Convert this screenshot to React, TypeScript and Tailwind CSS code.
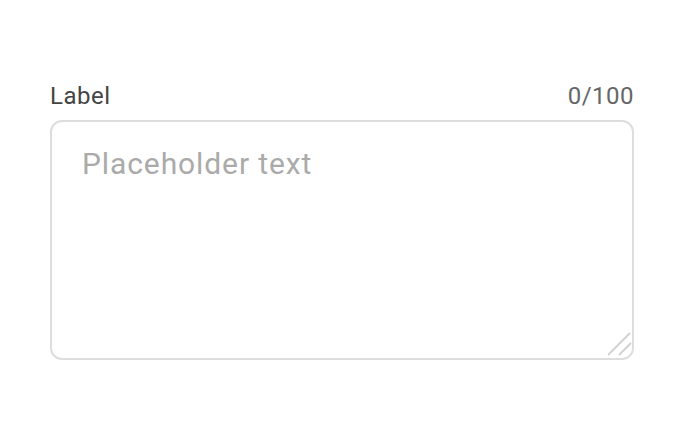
export default function App() {
  return (
    <div className="min-h-screen bg-white font-['Roboto',sans-serif] pl-[50px] pr-[48px] pt-[82px]">
      <div className="flex items-end justify-between pb-[10px] leading-[28px] tracking-[0.5px]">
        <label htmlFor="ta" className="text-[24px] text-[#444]">
          Label
        </label>
        <span className="text-[24px] text-[#666]">0/100</span>
      </div>
      <div className="relative">
        <textarea
          id="ta"
          placeholder="Placeholder text"
          className="block h-[240px] w-full resize-none rounded-[12px] border-2 border-[#ddd] bg-white px-[30px] pt-[22px] pb-[16px] text-[30px] leading-[40px] tracking-[0.03em] text-[#333] outline-none placeholder:text-[#aaa]"
        />
        <svg
          className="pointer-events-none absolute right-0 bottom-[3px]"
          width="26"
          height="26"
          viewBox="0 0 26 26"
        >
          <path d="M22 2 L0 24 M23 12 L11 24" stroke="#d0d0d0" strokeWidth="1.8" fill="none" />
        </svg>
      </div>
    </div>
  );
}
